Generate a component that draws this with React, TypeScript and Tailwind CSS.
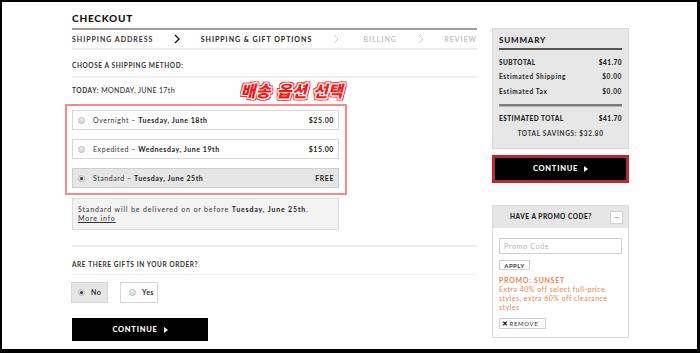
function Chevron({ dark }: { dark?: boolean }) {
  return (
    <svg width="6" height="10" viewBox="0 0 6 10" className="shrink-0">
      <polyline points="1,1 5,5 1,9" fill="none" stroke={dark ? "#111" : "#cfcfcf"} strokeWidth={dark ? 1.3 : 1} />
    </svg>
  );
}

function Radio({ checked }: { checked?: boolean }) {
  return (
    <span className="flex h-[7px] w-[7px] shrink-0 items-center justify-center rounded-full border border-[#b9b9b9] bg-gradient-to-b from-[#f4f4f4] to-[#d4d4d4]">
      {checked && <span className="h-[3px] w-[3px] rounded-full bg-[#333]" />}
    </span>
  );
}

function Triangle() {
  return (
    <svg width="4" height="6" viewBox="0 0 4 6" className="ml-[6px]">
      <polygon points="0,0 4,3 0,6" fill="#fff" />
    </svg>
  );
}

function ShippingOption({ name, date, price, checked }: { name: string; date: string; price: string; checked?: boolean }) {
  return (
    <div
      className={`flex h-[20px] items-center border pl-[5px] pr-[4px] text-[7px] tracking-[0.08em] ${
        checked ? "border-[#cdcdcd] bg-[#e6e6e6]" : "border-[#d8d8d8] bg-white"
      }`}
    >
      <Radio checked={checked} />
      <span className="ml-[8px] text-[#333]">
        {name} – <span className="font-bold text-[#222]">{date}</span>
      </span>
      <span className="ml-auto font-bold text-[#222]">{price}</span>
    </div>
  );
}

function Main() {
  return (
    <div className="flex w-[405px] flex-col">
      <div className="h-[26px] pt-[9px] text-[10px] font-black leading-[14px] tracking-[0.08em] text-[#111]">CHECKOUT</div>
      <div className="h-[2px] bg-[#9c9c9c]" />
      <div className="flex h-[18px] items-center justify-between text-[7px] font-bold tracking-[0.14em]">
        <span className="text-[#333]">SHIPPING ADDRESS</span>
        <Chevron dark />
        <span className="text-[#222]">SHIPPING &amp; GIFT OPTIONS</span>
        <Chevron />
        <span className="ml-[4px] text-[#c4c4c4]">BILLING</span>
        <Chevron />
        <span className="text-[#c4c4c4]">REVIEW</span>
      </div>
      <div className="h-[2px] bg-[#ececec]" />
      <div className="flex h-[26px] items-center pt-[6px] text-[6.5px] font-bold tracking-[0.09em] text-[#333]">
        CHOOSE A SHIPPING METHOD:
      </div>
      <div className="h-[2px] bg-[#efefef]" />
      <div className="flex h-[26px] w-[275px] items-center justify-between pb-[2px]">
        <span className="text-[6.5px] font-bold tracking-[0.09em] text-[#333]">
          TODAY: <span className="text-[7px] font-medium tracking-[0.05em]">MONDAY, JUNE 17th</span>
        </span>
        <span className="mr-[4px] font-['Noto_Sans_CJK_KR',sans-serif] text-[16px] font-black italic leading-[20px] tracking-[0.02em] text-[#ee1c1c] [word-spacing:2px] [text-shadow:1px_0_0_#fff,-1px_0_0_#fff,0_1px_0_#fff,0_-1px_0_#fff,1px_1px_0_#fff,-1px_-1px_0_#fff,1px_-1px_0_#fff,-1px_1px_0_#fff,2px_0_0_#f33,-2px_0_0_#f33,0_2px_0_#f33,0_-2px_0_#f33,2px_2px_0_#f33,-2px_-2px_0_#f33,2px_-2px_0_#f33,-2px_2px_0_#f33]">
          배송 옵션 선택
        </span>
      </div>
      <div className="-ml-[7px] flex w-[282px] flex-col gap-[9px] border-2 border-[#f28b8b] pb-[5px] pl-[5px] pr-[6px] pt-[4px]">
        <ShippingOption name="Overnight" date="Tuesday, June 18th" price="$25.00" />
        <ShippingOption name="Expedited" date="Wednesday, June 19th" price="$15.00" />
        <ShippingOption name="Standard" date="Tuesday, June 25th" price="FREE" checked />
      </div>
      <div className="mt-[3px] h-[32px] w-[267px] border border-[#dcdcdc] bg-[#f3f3f3] pl-[5px] pt-[6px] text-[7px] leading-[9px] tracking-[0.12em] text-[#333]">
        Standard will be delivered on or before <span className="font-bold text-[#222]">Tuesday, June 25th</span>.
        <br />
        <span className="underline">More info</span>
      </div>
      <div className="mt-[15px] h-[2px] bg-[#ececec]" />
      <div className="flex h-[27px] items-center pt-[9px] text-[6.5px] font-bold tracking-[0.09em] text-[#333]">
        ARE THERE GIFTS IN YOUR ORDER?
      </div>
      <div className="h-[1px] bg-[#efefef]" />
      <div className="mt-[7px] flex gap-[12px] text-[7px] font-bold tracking-[0.06em] text-[#333]">
        <div className="-ml-[1px] flex h-[21px] w-[37px] items-center gap-[6px] border border-[#d6d6d6] bg-[#e6e6e6] pl-[6px]">
          <Radio checked />
          <span>No</span>
        </div>
        <div className="flex h-[21px] w-[38px] items-center gap-[6px] border border-[#d6d6d6] bg-white pl-[8px]">
          <Radio />
          <span>Yes</span>
        </div>
      </div>
      <button className="mt-[15px] flex h-[23px] w-[136px] items-center justify-center bg-black text-[7.5px] font-black tracking-[0.1em] text-white">
        CONTINUE
        <Triangle />
      </button>
    </div>
  );
}

function SummaryRow({ label, value, caps }: { label: string; value: string; caps?: boolean }) {
  return (
    <div
      className={`flex h-[14.5px] items-center justify-between text-[#222] ${
        caps ? "text-[6.5px] font-black tracking-[0.07em]" : "text-[6.5px] font-bold tracking-[0.1em]"
      }`}
    >
      <span>{label}</span>
      <span>{value}</span>
    </div>
  );
}

function Side() {
  return (
    <div className="flex w-[137px] flex-col pt-[26px]">
      <div className="h-[121px] border border-[#d9d9d9] bg-[#e7e7e7] px-[6px]">
        <div className="flex h-[18px] items-end pb-[1px] text-[8px] font-black tracking-[0.1em] text-[#222]">SUMMARY</div>
        <div className="mt-[1px] h-[1.5px] bg-[#555]" />
        <div className="pt-[6px]">
          <SummaryRow label="SUBTOTAL" value="$41.70" caps />
          <SummaryRow label="Estimated Shipping" value="$0.00" />
          <SummaryRow label="Estimated Tax" value="$0.00" />
        </div>
        <div className="mt-[5px] h-[3px] border-t-2 border-b border-t-[#7d7d7d] border-b-[#b5b5b5]" />
        <div className="mt-[5px]">
          <SummaryRow label="ESTIMATED TOTAL" value="$41.70" caps />
        </div>
        <div className="mt-[2px] text-center text-[6.5px] font-bold tracking-[0.1em] text-[#333]">TOTAL SAVINGS: $32.80</div>
      </div>
      <button className="mt-[6px] flex h-[28px] items-center justify-center border-2 border-[#e8161c] bg-black text-[7.5px] font-black tracking-[0.1em] text-white outline outline-1 -outline-offset-[3px] outline-[#555]">
        CONTINUE
        <Triangle />
      </button>
      <div className="mt-[22px] h-[133px] border border-[#dadada] bg-white">
        <div className="flex h-[22px] items-center bg-[#e6e6e6] pl-[17px] pr-[5px]">
          <span className="text-[6.5px] font-black tracking-[0.08em] text-[#222]">HAVE A PROMO CODE?</span>
          <span className="ml-auto flex h-[13px] w-[13px] items-center justify-center border border-[#d0d0d0] bg-white">
            <span className="h-[1px] w-[5px] bg-[#bbb]" />
          </span>
        </div>
        <div className="px-[6px] pt-[10px]">
          <div className="flex h-[16px] items-center border border-[#cfcfcf] bg-white pl-[4px] text-[7px] tracking-[0.1em] text-[#b8b8b8]">
            Promo Code
          </div>
          <div className="mt-[6px] flex h-[10px] w-[31px] items-center justify-center border border-[#cfcfcf] text-[6px] font-bold tracking-[0.08em] text-[#333]">
            APPLY
          </div>
          <div className="mt-[6px] text-[7px] font-bold leading-[9px] tracking-[0.1em] text-[#f2834a]">PROMO: SUNSET</div>
          <div className="text-[7px] leading-[9px] tracking-[0.07em] text-[#f2834a]">
            Extra 40% off select full-price styles, extra 60% off clearance styles
          </div>
          <div className="mt-[6px] flex h-[11px] w-[47px] items-center border border-[#cfcfcf] pl-[2px] text-[6px] tracking-[0.1em] text-[#333]">
            <span className="mr-[1px] text-[7px] font-black leading-none text-black">✕</span>
            REMOVE
          </div>
        </div>
      </div>
    </div>
  );
}

export default function App() {
  return (
    <div className="h-[353px] w-[700px] overflow-hidden border-b-[4px] border-l-2 border-r-[3px] border-t-2 border-black bg-white font-['Lato',sans-serif]">
      <div className="flex gap-[15px] pl-[70px]">
        <Main />
        <Side />
      </div>
    </div>
  );
}
